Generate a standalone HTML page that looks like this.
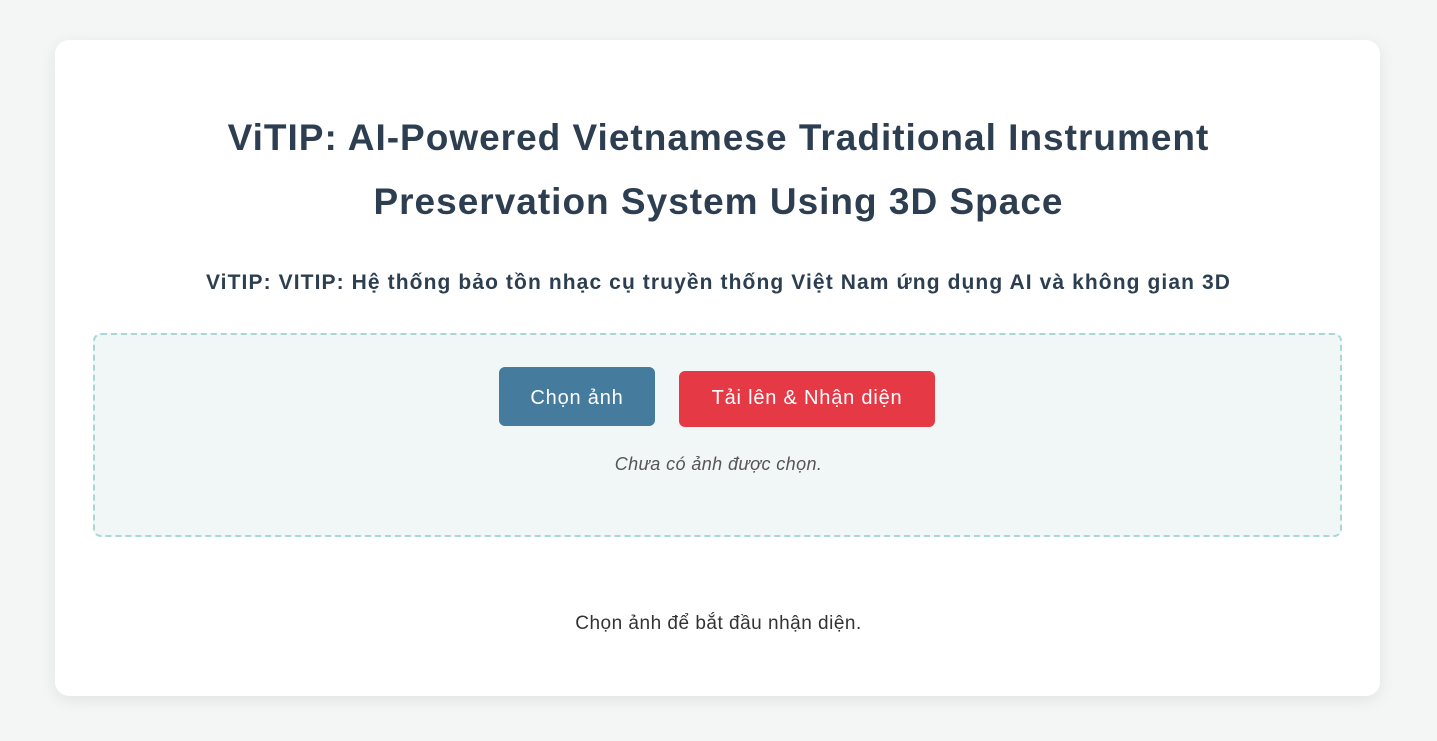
<!DOCTYPE html>
<html><head><meta charset="utf-8"><style>
html,body{margin:0;padding:0}
body{background:#f4f6f6;width:1437px;height:741px;font-family:"Liberation Sans","DejaVu Sans",sans-serif;color:#2c3e50;overflow:hidden}
.card{position:absolute;left:55px;top:40px;width:1325px;height:656px;background:#fff;border-radius:14px;box-shadow:0 4px 16px rgba(0,0,0,0.08)}
h1{position:absolute;left:0;right:0;top:106px;margin:0;text-align:center;font-size:37px;letter-spacing:1px;line-height:64px;font-weight:bold;color:#2c3e50}
.sub{position:absolute;left:0;right:0;top:269px;text-align:center;font-size:21px;letter-spacing:1.1px;font-weight:bold;line-height:28px}
.box{position:absolute;left:93px;top:333px;width:1245px;height:200px;background:#f1f7f7;border:2px dashed #a9d6d6;border-radius:8px}
.b1{position:absolute;left:499px;top:367px;width:156px;height:59px;background:#457b9d;color:#fff;border-radius:6px;font-size:20px;letter-spacing:0.8px;line-height:62px;text-align:center}
.b2{position:absolute;left:679px;top:371px;width:256px;height:56px;background:#e63946;color:#fff;border-radius:6px;font-size:20px;letter-spacing:0.8px;line-height:54px;text-align:center}
.note{position:absolute;left:0;width:1437px;top:452px;text-align:center;font-style:italic;font-size:18px;letter-spacing:0.4px;color:#555;line-height:24px}
.bot{position:absolute;left:0;width:1437px;top:612px;text-align:center;font-size:19px;letter-spacing:0.5px;color:#333;line-height:24px}
</style></head><body>
<div class="card"></div>
<h1>ViTIP: AI-Powered Vietnamese Traditional Instrument<br>Preservation System Using 3D Space</h1>
<div class="sub">ViTIP: VITIP: Hệ thống bảo tồn nhạc cụ truyền thống Việt Nam ứng dụng AI và không gian 3D</div>
<div class="box"></div>
<div class="b1">Chọn ảnh</div>
<div class="b2">Tải lên &amp; Nhận diện</div>
<div class="note">Chưa có ảnh được chọn.</div>
<div class="bot">Chọn ảnh để bắt đầu nhận diện.</div>
</body></html>
